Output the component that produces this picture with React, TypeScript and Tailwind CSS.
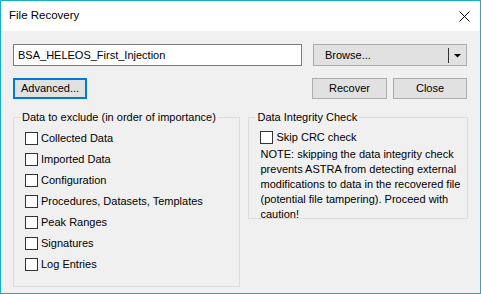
import React from 'react'

const excludeItems = [
  'Collected Data',
  'Imported Data',
  'Configuration',
  'Procedures, Datasets, Templates',
  'Peak Ranges',
  'Signatures',
  'Log Entries',
]

const noteLines = [
  'NOTE: skipping the data integrity check',
  'prevents ASTRA from detecting external',
  'modifications to data in the recovered file',
  '(potential file tampering). Proceed with',
  'caution!',
]

function CheckBox() {
  return <span className="h-[13px] w-[13px] shrink-0 border border-[#333333] bg-white" />
}

function GroupBox({ title, className, children }: { title: string; className: string; children: React.ReactNode }) {
  return (
    <div className={`relative border border-[#dcdcdc] ${className}`}>
      <span className="absolute left-[6px] top-[-9px] bg-[#f0f0f0] px-[2px] leading-[16px]">{title}</span>
      {children}
    </div>
  )
}

export default function App() {
  return (
    <div
      className="flex h-[294px] w-[481px] flex-col border border-[#19aec6] bg-[#f0f0f0] text-[11px] text-black"
      style={{ fontFamily: '"Liberation Sans", Arial, sans-serif' }}
    >
      <div className="flex h-[30px] shrink-0 items-center justify-between bg-white pl-[8px] pr-[10px]">
        <span className="text-[11.5px]">File Recovery</span>
        <svg width="11" height="11" viewBox="0 0 11 11" className="mt-[1px]">
          <path d="M0.5 0.5 L10.5 10.5 M10.5 0.5 L0.5 10.5" stroke="#000" strokeWidth="1" />
        </svg>
      </div>

      <div className="flex flex-1 flex-col px-[12px] pt-[13px]">
        <div className="flex h-[22px] items-stretch">
          <div className="flex w-[289px] items-center border border-[#7a7a7a] bg-white pl-[4px]">
            BSA_HELEOS_First_Injection
          </div>
          <div className="ml-[11px] flex w-[154px] items-center border border-[#adadad] bg-[#e1e1e1]">
            <span className="flex-1 pl-[11px]">Browse...</span>
            <span className="h-[15px] w-px bg-[#333333]" />
            <svg width="17" height="20" viewBox="0 0 17 20">
              <path d="M5 9 H12 L8.5 12.5 Z" fill="#000" />
            </svg>
          </div>
        </div>

        <div className="mt-[12px] flex h-[21px]">
          <button className="w-[74px] border-2 border-[#0078d7] bg-[#e1e1e1]">Advanced...</button>
          <button className="ml-auto w-[75px] border border-[#adadad] bg-[#e1e1e1]">Recover</button>
          <button className="ml-[6px] mr-[1px] w-[74px] border border-[#adadad] bg-[#e1e1e1]">Close</button>
        </div>

        <div className="mt-[18px] flex items-start">
          <GroupBox title="Data to exclude (in order of importance)" className="h-[170px] w-[228px] pl-[11px] pt-[10px]">
            <div className="flex flex-col">
              {excludeItems.map((item) => (
                <label key={item} className="flex h-[21px] items-center gap-[3px]">
                  <CheckBox />
                  <span className="mt-[-1px]">{item}</span>
                </label>
              ))}
            </div>
          </GroupBox>

          <GroupBox title="Data Integrity Check" className="ml-[8px] h-[102px] w-[220px] pl-[11px] pt-[10px]">
            <label className="flex h-[19px] items-center gap-[3px]">
              <CheckBox />
              <span className="mt-[-1px]">Skip CRC check</span>
            </label>
            <p className="whitespace-nowrap leading-[15px]">
              {noteLines.map((line) => (
                <span key={line} className="block">
                  {line}
                </span>
              ))}
            </p>
          </GroupBox>
        </div>
      </div>
    </div>
  )
}
